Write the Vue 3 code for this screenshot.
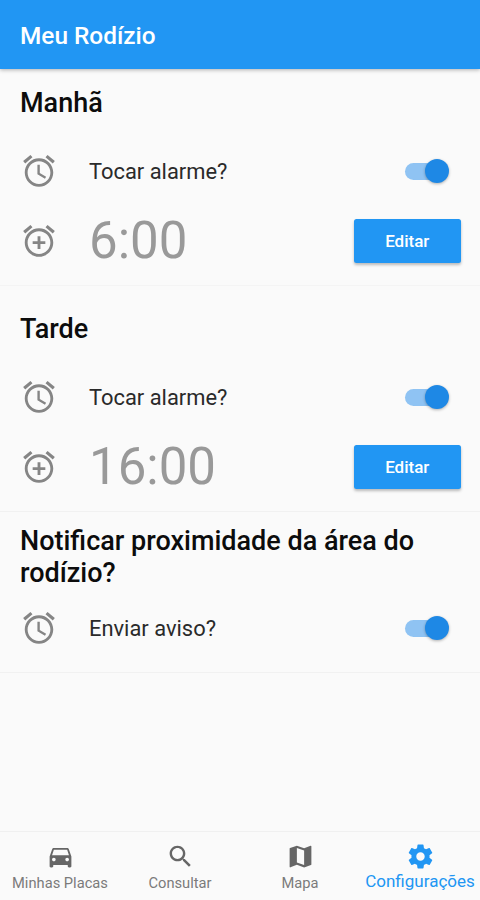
<script setup>
import { ref } from 'vue'

const bells = 'M22 5.72l-4.6-3.86-1.29 1.53 4.6 3.86L22 5.72zM7.88 3.39L6.6 1.86 2 5.71l1.29 1.53 4.59-3.85z'
const ring = 'M12 4c-4.97 0-9 4.03-9 9s4.02 9 9 9c4.97 0 9-4.03 9-9s-4.03-9-9-9zm0 16.2c-3.98 0-7.2-3.22-7.2-7.2s3.22-7.2 7.2-7.2 7.2 3.22 7.2 7.2-3.22 7.2-7.2 7.2z'
const alarm = bells + ring + 'M12.5 8H11v6l4.75 2.85.75-1.23-4-2.37V8z'
const addAlarm = bells + ring + 'M12.9 9h-1.8v3.1H8v1.8h3.1V17h1.8v-3.1H16v-1.8h-3.1V9z'

const sections = ref([
  { id: 'manha', title: 'Manhã', label: 'Tocar alarme?', time: '6:00', on: true },
  { id: 'tarde', title: 'Tarde', label: 'Tocar alarme?', time: '16:00', on: true },
  { id: 'aviso', title: 'Notificar proximidade da área do rodízio?', label: 'Enviar aviso?', on: true }
])

const active = ref('config')
const tabs = [
  { id: 'placas', label: 'Minhas Placas', icon: 'M18.92 6.01C18.72 5.42 18.16 5 17.5 5h-11c-.66 0-1.21.42-1.42 1.01L3 12v8c0 .55.45 1 1 1h1c.55 0 1-.45 1-1v-1h12v1c0 .55.45 1 1 1h1c.55 0 1-.45 1-1v-8l-2.08-5.99zM6.5 16c-.83 0-1.5-.67-1.5-1.5S5.67 13 6.5 13s1.5.67 1.5 1.5S7.33 16 6.5 16zm11 0c-.83 0-1.5-.67-1.5-1.5s.67-1.5 1.5-1.5 1.5.67 1.5 1.5-.67 1.5-1.5 1.5zM5 11l1.5-4.5h11L19 11H5z' },
  { id: 'consultar', label: 'Consultar', icon: 'M15.5 14h-.79l-.28-.27C15.41 12.59 16 11.11 16 9.5 16 5.91 13.09 3 9.5 3S3 5.91 3 9.5 5.91 16 9.5 16c1.61 0 3.09-.59 4.23-1.57l.27.28v.79l5 4.99L20.49 19l-4.99-5zm-6 0C7.01 14 5 11.99 5 9.5S7.01 5 9.5 5 14 7.01 14 9.5 11.99 14 9.5 14z' },
  { id: 'mapa', label: 'Mapa', icon: 'M20.5 3l-.16.03L15 5.1 9 3 3.36 4.9c-.21.07-.36.25-.36.48V20.5c0 .28.22.5.5.5l.16-.03L9 18.9l6 2.1 5.64-1.9c.21-.07.36-.25.36-.48V3.5c0-.28-.22-.5-.5-.5zM15 19l-6-2.11V5l6 2.11V19z' },
  { id: 'config', label: 'Configurações', icon: 'M19.43 12.98c.04-.32.07-.64.07-.98s-.03-.66-.07-.98l2.11-1.65c.19-.15.24-.42.12-.64l-2-3.46c-.12-.22-.39-.3-.61-.22l-2.49 1c-.52-.4-1.08-.73-1.69-.98l-.38-2.65C14.46 2.18 14.25 2 14 2h-4c-.25 0-.46.18-.49.42l-.38 2.65c-.61.25-1.17.59-1.69.98l-2.49-1c-.23-.09-.49 0-.61.22l-2 3.46c-.13.22-.07.49.12.64l2.11 1.65c-.04.32-.07.65-.07.98s.03.66.07.98l-2.11 1.65c-.19.15-.24.42-.12.64l2 3.46c.12.22.39.3.61.22l2.49-1c.52.4 1.08.73 1.69.98l.38 2.65c.03.24.24.42.49.42h4c.25 0 .46-.18.49-.42l.38-2.65c.61-.25 1.17-.59 1.69-.98l2.49 1c.23.09.49 0 .61-.22l2-3.46c.12-.22.07-.49-.12-.64l-2.11-1.65zM12 15.5c-1.93 0-3.5-1.57-3.5-3.5s1.57-3.5 3.5-3.5 3.5 1.57 3.5 3.5-1.57 3.5-3.5 3.5z' }
]
</script>

<template>
  <div class="screen">
    <header class="bar">Meu Rodízio</header>
    <main class="content">
      <section v-for="s in sections" :key="s.id" class="section" :class="s.id">
        <h2 class="title">{{ s.title }}</h2>
        <div class="row">
          <svg class="icon" viewBox="0 0 24 24"><path :d="alarm" /></svg>
          <span class="label">{{ s.label }}</span>
          <button class="switch" :class="{ on: s.on }" role="switch" :aria-checked="s.on" @click="s.on = !s.on">
            <span class="thumb"></span>
          </button>
        </div>
        <div v-if="s.time" class="row time-row">
          <svg class="icon" viewBox="0 0 24 24"><path :d="addAlarm" /></svg>
          <span class="time">{{ s.time }}</span>
          <button class="edit">Editar</button>
        </div>
      </section>
    </main>
    <nav class="tabs">
      <button v-for="t in tabs" :key="t.id" class="tab" :class="{ active: active === t.id }" @click="active = t.id">
        <svg class="tab-icon" viewBox="0 0 24 24"><path :d="t.icon" /></svg>
        <span class="tab-label">{{ t.label }}</span>
      </button>
    </nav>
  </div>
</template>

<style>
body {
  background: #fafafa;
}
</style>

<style scoped>
.screen {
  display: flex;
  flex-direction: column;
  height: 900px;
  overflow: hidden;
  background: #fafafa;
  font-family: Roboto, sans-serif;
}
button {
  border: 0;
  padding: 0;
  background: none;
  font-family: inherit;
  cursor: pointer;
}
.bar {
  flex: none;
  box-sizing: border-box;
  height: 69px;
  padding: 2px 20px 0;
  display: flex;
  align-items: center;
  background: #2196f3;
  color: #fff;
  font-size: 24.4px;
  font-weight: 500;
  box-shadow: 0 1px 4px rgba(0, 0, 0, 0.3);
}
.content {
  flex: 1;
}
.section {
  box-sizing: border-box;
  padding: 18px 19px 0 20px;
  border-bottom: 1px solid #f1f1f1;
}
.manha {
  height: 217px;
  border-bottom-color: #f4f4f4;
}
.tarde {
  height: 226px;
  padding-top: 27px;
}
.aviso {
  height: 161px;
  padding-top: 13px;
}
.title {
  margin: 0 0 33.5px;
  font-size: 27px;
  line-height: 32px;
  font-weight: 500;
  color: #0c0c0c;
}
.aviso .title {
  margin-bottom: 20.5px;
}
.row {
  display: flex;
  align-items: center;
  height: 37px;
}
.time-row {
  height: 44px;
  margin-top: 29px;
}
.icon {
  flex: none;
  width: 38px;
  height: 38px;
  margin: 0 30.6px 0 0.4px;
  fill: #858585;
}
.label {
  flex: 1;
  padding-top: 1px;
  font-size: 21.9px;
  line-height: 30px;
  color: #2a2a2a;
}
.time {
  flex: 1;
  padding-top: 1px;
  font-size: 51px;
  line-height: 44px;
  color: #999;
}
.switch {
  display: flex;
  align-items: center;
  justify-content: flex-start;
  width: 40px;
  height: 17px;
  margin-right: 16px;
  border-radius: 9px;
  background: #bdbdbd;
}
.switch.on {
  justify-content: flex-end;
  background: #8fc3f3;
}
.thumb {
  flex: none;
  width: 24.4px;
  height: 24.4px;
  margin-right: -4px;
  border-radius: 50%;
  background: #fff;
  box-shadow: 0 1px 3px rgba(0, 0, 0, 0.3);
}
.on .thumb {
  background: #1e88e5;
}
.edit {
  width: 107.5px;
  height: 44px;
  border-radius: 2.5px;
  background: #2196f3;
  color: #fff;
  font-size: 17px;
  font-weight: 500;
  box-shadow: 0 2px 3px rgba(0, 0, 0, 0.26);
}
.tabs {
  flex: none;
  display: flex;
  height: 68px;
  border-top: 1px solid #f0f0f0;
}
.tab {
  flex: 1 1 0;
  min-width: 0;
  display: flex;
  flex-direction: column;
  align-items: center;
  padding-top: 10px;
  color: #7b7b7b;
}
.tab-icon {
  width: 29px;
  height: 29px;
  fill: #666;
}
.tab-label {
  margin-top: 3px;
  font-size: 14.7px;
  line-height: 18px;
  white-space: nowrap;
}
.active {
  color: #2196f3;
}
.active .tab-icon {
  fill: #2196f3;
}
.active .tab-label {
  margin-top: 1px;
  font-size: 17px;
}
</style>
